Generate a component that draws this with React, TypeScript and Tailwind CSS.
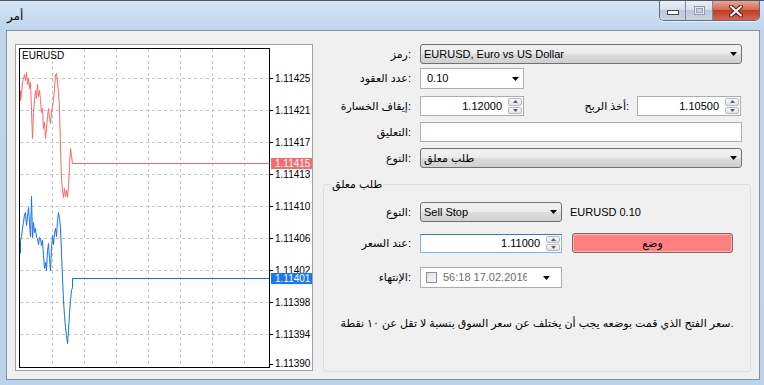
import React from 'react';

const FONT = "font-['Liberation_Sans','DejaVu_Sans',sans-serif]";

const redPts =
  '20,90 20,100 21,94 22,82 23,78 24,74 25,80 26,72 27,84 28,78 29,88 30,82 31,110 32,138 33,112 34,100 35,90 36,98 37,84 38,96 39,90 40,100 41,112 42,108 43,128 44,122 45,138 46,128 47,116 48,108 49,118 50,123 51,112 52,105 53,100 54,88 55,74 56,73 57,82 58,92 59,108 60,148 61,178 62,190 63,197 64,188 65,196 66,190 67,197 68,186 69,165 70,148 71,155 72,163 269,163';
const bluePts =
  '20,253 20,240 21,236 22,228 23,222 24,214 25,212 26,225 27,216 28,207 29,222 30,236 31,196 32,237 33,222 34,232 35,228 36,237 37,238 38,244 39,237 40,238 41,245 42,240 43,255 44,268 45,262 46,270 47,250 48,243 49,258 50,270 51,248 52,235 53,244 54,233 55,228 56,236 57,220 58,212 59,218 60,228 61,253 62,278 63,300 64,315 65,327 66,335 67,343 68,330 69,313 70,300 71,290 72,287 72,278 269,278';

const gridX = [52, 84, 116, 148, 180, 212, 244];
const axis = [
  { y: 78, p: '1.11425' },
  { y: 110, p: '1.11421' },
  { y: 142, p: '1.11417' },
  { y: 174, p: '1.11413' },
  { y: 206, p: '1.11410' },
  { y: 238, p: '1.11406' },
  { y: 270, p: '1.11402' },
  { y: 302, p: '1.11398' },
  { y: 334, p: '1.11394' },
];

function Chart() {
  return (
    <div className="h-[327px] w-[298px] shrink-0 border border-[#a0a0a0] bg-white">
      <svg width="296" height="325" viewBox="16 45 296 325" fontFamily="Liberation Sans, sans-serif">
        <g stroke="#c4c4c4" strokeDasharray="3 3" shapeRendering="crispEdges">
          {gridX.map((x) => (
            <line key={x} x1={x + 0.5} y1="49" x2={x + 0.5} y2="367" />
          ))}
          {axis.map((a) => (
            <line key={a.y} x1="20" y1={a.y + 0.5} x2="269" y2={a.y + 0.5} />
          ))}
        </g>
        <rect x="19.5" y="48.5" width="250" height="319" fill="none" stroke="#000" />
        <g stroke="#000" shapeRendering="crispEdges">
          {axis.map((a) => (
            <line key={a.y} x1="270" y1={a.y + 0.5} x2="273" y2={a.y + 0.5} />
          ))}
          <line x1="270" y1="364.5" x2="273" y2="364.5" />
        </g>
        <text x="22" y="59" fontSize="10" fill="#000">EURUSD</text>
        <g fontSize="10" fill="#000">
          {axis.map((a) => (
            <text key={a.p} x="275" y={a.y + 4}>{a.p}</text>
          ))}
          <text x="275" y="367">1.11390</text>
        </g>
        <g transform="translate(0.5 0.5)" fill="none">
          <polyline points={redPts} stroke="#f76868" />
          <polyline points={bluePts} stroke="#1470f2" />
        </g>
        <rect x="271" y="158" width="41" height="11" fill="#f76c6c" />
        <text x="275" y="167" fontSize="10" fill="#fff">1.11415</text>
        <rect x="271" y="273" width="41" height="11" fill="#1779f5" />
        <text x="275" y="282" fontSize="10" fill="#fff">1.11401</text>
      </svg>
    </div>
  );
}

function DownArrow() {
  return (
    <svg width="7" height="4" viewBox="0 0 7 4">
      <path d="M0 0h7L3.5 4z" fill="#000" />
    </svg>
  );
}

function SpinButtons() {
  return (
    <div className="flex w-[15px] shrink-0 flex-col gap-[1px] py-[1px] pr-[1px]">
      <div className="flex flex-1 items-center justify-center rounded-[2px] border border-[#b9b9b9] bg-gradient-to-b from-[#f8f8f8] to-[#e2e2e2]">
        <svg width="5" height="3" viewBox="0 0 5 3">
          <path d="M0 3h5L2.5 0z" fill="#4a5c7a" />
        </svg>
      </div>
      <div className="flex flex-1 items-center justify-center rounded-[2px] border border-[#b9b9b9] bg-gradient-to-b from-[#f8f8f8] to-[#e2e2e2]">
        <svg width="5" height="3" viewBox="0 0 5 3">
          <path d="M0 0h5L2.5 3z" fill="#4a5c7a" />
        </svg>
      </div>
    </div>
  );
}

function Label({ children, className = 'w-[88px]' }: { children: React.ReactNode; className?: string }) {
  return <div className={`shrink-0 text-right ${className}`}>{children}</div>;
}

function Select({ children, className }: { children: React.ReactNode; className: string }) {
  return (
    <div
      className={`flex h-full items-center justify-between rounded-[3px] border border-[#707070] bg-[linear-gradient(#f2f2f2,#ebebeb_50%,#dddddd_50%,#d0d0d0)] pl-[3px] pr-[4px] ${className}`}
    >
      <span>{children}</span>
      <DownArrow />
    </div>
  );
}

export default function App() {
  return (
    <div
      className={`${FONT} flex h-[385px] w-[764px] flex-col overflow-hidden border-t border-[#4d5766] bg-[linear-gradient(180deg,#d6e5f4,#bed5ec_28px,#bbd2ea)] text-[11px] text-black`}
    >
      {/* title bar */}
      <div className="flex h-[29px] shrink-0 items-start justify-between">
        <div className="pl-[7px] pt-[7px] text-[12px] leading-[16px]">أمر</div>
        <div className="mr-[4px] flex h-[20px] overflow-hidden rounded-b-[5px] border border-t-0 border-[#5b6a7c] shadow-[0_1px_0_rgba(255,255,255,0.7)]">
          <div className="flex w-[26px] items-center justify-center border-r border-[#7d8a9b] bg-[linear-gradient(#e9eff6,#d6e0ec_45%,#b9c8da_50%,#c9d6e5)]">
            <svg width="12" height="6" viewBox="0 0 12 6" className="mt-[5px]">
              <rect x="0.5" y="0.5" width="11" height="4" fill="#fff" stroke="#3d4a5a" />
            </svg>
          </div>
          <div className="flex w-[27px] items-center justify-center border-r border-[#7d8a9b] bg-[linear-gradient(#e9eff6,#d6e0ec_45%,#b9c8da_50%,#c9d6e5)]">
            <svg width="11" height="9" viewBox="0 0 11 9">
              <rect x="0.5" y="0.5" width="10" height="8" fill="#e8edf3" stroke="#8f9aa8" />
              <rect x="2.5" y="2.5" width="6" height="4" fill="#c9d3df" stroke="#9aa4b1" />
            </svg>
          </div>
          <div className="flex w-[46px] items-center justify-center bg-[linear-gradient(#e9a896,#d56a53_45%,#c13b25_50%,#d4674f)]">
            <svg width="14" height="12" viewBox="0 0 14 12">
              <path d="M2 1.5L12 10.5M12 1.5L2 10.5" stroke="#5a2117" strokeWidth="4" strokeLinecap="round" />
              <path d="M2 1.5L12 10.5M12 1.5L2 10.5" stroke="#fff" strokeWidth="2" strokeLinecap="round" />
            </svg>
          </div>
        </div>
      </div>

      {/* client area */}
      <div className="ml-[6px] flex h-[350px] w-[754px] shrink-0 items-start border border-[#8190a3] bg-[#f0f0f0]">
        <div className="ml-[8px] mt-[13px]">
          <Chart />
        </div>

        <div className="ml-[10px] mt-[13px] flex w-[428px] flex-col">
          <div className="flex h-[20px] items-center">
            <Label>رمز:</Label>
            <Select className="ml-[9px] w-[322px]">EURUSD, Euro vs US Dollar</Select>
          </div>

          <div className="mt-[4px] flex h-[21px] items-center">
            <Label>عدد العقود:</Label>
            <div className="ml-[9px] flex h-full w-[104px] items-center justify-between border border-[#abadb3] bg-white pl-[6px] pr-[4px]">
              <span>0.10</span>
              <DownArrow />
            </div>
          </div>

          <div className="mt-[7px] flex h-[20px] items-center">
            <Label>إيقاف الخسارة:</Label>
            <div className="ml-[9px] flex h-full w-[104px] border border-[#abadb3] bg-white">
              <div className="flex flex-1 items-center justify-end pr-[6px]">1.12000</div>
              <SpinButtons />
            </div>
            <Label className="w-[105px]">أخذ الربح:</Label>
            <div className="ml-[8px] flex h-full w-[104px] border border-[#abadb3] bg-white">
              <div className="flex flex-1 items-center justify-end pr-[6px]">1.10500</div>
              <SpinButtons />
            </div>
          </div>

          <div className="mt-[6px] flex h-[20px] items-center">
            <Label>التعليق:</Label>
            <div className="ml-[9px] h-full w-[322px] border border-[#abadb3] bg-white" />
          </div>

          <div className="mt-[6px] flex h-[20px] items-center">
            <Label>النوع:</Label>
            <Select className="ml-[9px] w-[322px]">طلب معلق</Select>
          </div>

          <fieldset className="mt-[9px] h-[195px] w-[428px] rounded-[3px] border border-[#d5dfe5]">
            <legend className="ml-[7px] px-[1px] leading-[14px]">طلب معلق</legend>

            <div className="mt-[11px] flex h-[20px] items-center">
              <Label className="w-[87px]">النوع:</Label>
              <Select className="ml-[9px] w-[142px]">Sell Stop</Select>
              <span className="ml-[8px]">EURUSD 0.10</span>
            </div>

            <div className="mt-[11px] flex h-[20px] items-center">
              <Label className="w-[87px]">عند السعر:</Label>
              <div className="ml-[9px] mt-[1px] flex h-[19px] w-[142px] border border-[#7eb4ea] border-t-[#3d7bad] bg-white">
                <div className="flex flex-1 items-center justify-end pr-[6px]">1.11000</div>
                <SpinButtons />
              </div>
              <div className="ml-[10px] flex h-full w-[161px] items-center justify-center rounded-[3px] border border-[#707070] bg-[#ff7f7f] shadow-[inset_0_0_0_1px_#ffb3b3]">
                وضع
              </div>
            </div>

            <div className="mt-[14px] flex h-[21px] items-center">
              <Label className="w-[87px]">الإنتهاء:</Label>
              <div className="ml-[9px] flex h-full w-[142px] items-center border border-[#abadb3] bg-white pl-[5px] pr-[11px]">
                <div className="h-[11px] w-[11px] shrink-0 border border-[#8e8f8f] bg-gradient-to-br from-[#dde3ea] to-[#f6f8fa]" />
                <span className="ml-[6px] w-[84px] overflow-hidden whitespace-nowrap text-[#6d6d6d]">56:18 17.02.2016</span>
                <span className="ml-auto flex">
                  <DownArrow />
                </span>
              </div>
            </div>

            <div className="mt-[28px] whitespace-nowrap text-center leading-[14px]">
              سعر الفتح الذي قمت بوضعه يجب أن يختلف عن سعر السوق بنسبة لا تقل عن ١٠ نقطة.
            </div>
          </fieldset>
        </div>
      </div>
    </div>
  );
}
